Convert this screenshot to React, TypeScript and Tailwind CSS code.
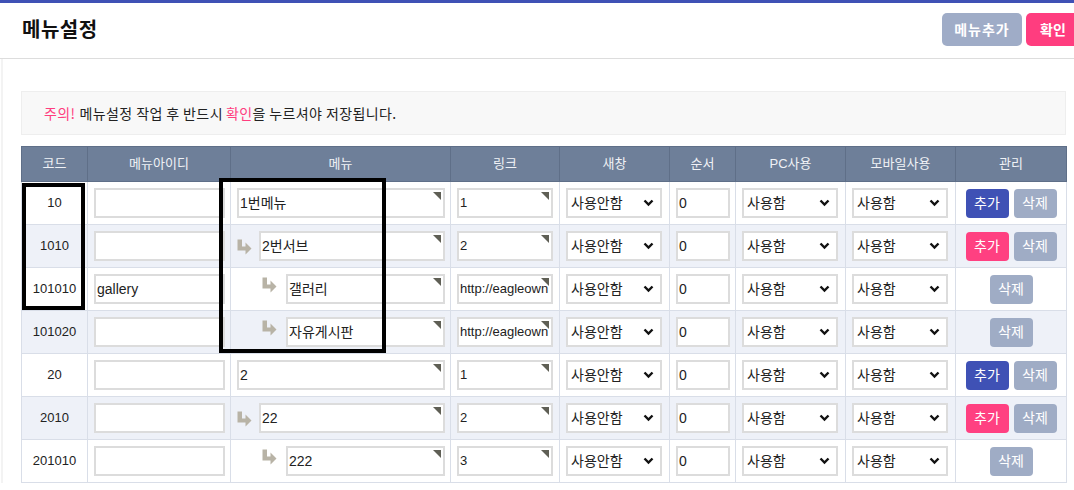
import React from "react";

const FONT = { fontFamily: '"Liberation Sans", "Noto Sans CJK KR", sans-serif' };
const KFONT = { fontFamily: '"Noto Sans CJK KR", "Liberation Sans", sans-serif' };

type Row = {
  code: string;
  id: string;
  menu: string;
  depth: number;
  link: string;
  add: "blue" | "pink" | null;
};

const rows: Row[] = [
  { code: "10", id: "", menu: "1번메뉴", depth: 0, link: "1", add: "blue" },
  { code: "1010", id: "", menu: "2번서브", depth: 1, link: "2", add: "pink" },
  { code: "101010", id: "gallery", menu: "갤러리", depth: 2, link: "http://eagleown", add: null },
  { code: "101020", id: "", menu: "자유게시판", depth: 2, link: "http://eagleown", add: null },
  { code: "20", id: "", menu: "2", depth: 0, link: "1", add: "blue" },
  { code: "2010", id: "", menu: "22", depth: 1, link: "2", add: "pink" },
  { code: "201010", id: "", menu: "222", depth: 2, link: "3", add: null },
];

function Arrow() {
  return (
    <svg width="15" height="16" viewBox="0 0 15 16" className="shrink-0">
      <path d="M0.5 0.5 H5 V7.5 H8.5 V3.5 L14.5 9.5 L8.5 15.5 V11.5 H0.5 Z" fill="#b8b3a6" />
    </svg>
  );
}

function Corner() {
  return (
    <span className="absolute right-[2px] top-[2px] w-0 h-0 border-l-[8px] border-l-transparent border-t-[8px] border-t-[#5f5f55]" />
  );
}

function TextBox({
  value,
  width,
  corner,
  small,
}: {
  value: string;
  width: number;
  corner?: boolean;
  small?: boolean;
}) {
  return (
    <div
      className={`relative h-[30px] border-2 border-[#dcdcdc] bg-white flex items-center ${
        small ? "text-[13px]" : "text-[14px]"
      } text-[#222] pl-[1px] overflow-hidden whitespace-nowrap`}
      style={{ width }}
    >
      {value}
      {corner && <Corner />}
    </div>
  );
}

function SelectBox({ value }: { value: string }) {
  return (
    <div className="h-[30px] w-[96px] border-2 border-[#dcdcdc] bg-white flex items-center justify-between pl-[3px] pr-[6px] text-[14px] text-[#222]">
      <span>{value}</span>
      <svg width="11" height="8" viewBox="0 0 11 8">
        <polyline points="1.5,1.5 5.5,5.5 9.5,1.5" fill="none" stroke="#111" strokeWidth="2.4" />
      </svg>
    </div>
  );
}

function Btn({ label, color }: { label: string; color: string }) {
  return (
    <div
      className="h-[29px] w-[43px] rounded-[4px] flex items-center justify-center text-white text-[14px]"
      style={{ backgroundColor: color }}
    >
      {label}
    </div>
  );
}

export default function App() {
  const headers = [
    ["코드", 66],
    ["메뉴아이디", 143],
    ["메뉴", 220],
    ["링크", 109],
    ["새창", 110],
    ["순서", 66],
    ["PC사용", 110],
    ["모바일사용", 110],
    ["관리", 111],
  ] as const;

  return (
    <div className="w-[1074px] h-[490px] overflow-hidden bg-white relative" style={FONT}>
      <div className="h-[3px] bg-[#3f51b5]" />
      <div className="h-[56px] border-b border-[#dddddd] flex items-center justify-between pl-[22px]">
        <h1 className="text-[20px] font-bold text-[#111] tracking-[0.5px] -mt-[3px]" style={KFONT}>
          메뉴설정
        </h1>
        <div className="flex gap-[4px] -mr-[6px] -mt-[2px]" style={KFONT}>
          <div className="h-[33px] w-[80px] rounded-[5px] bg-[#9facc7] text-white text-[14px] font-bold flex items-center justify-center tracking-[1px]">
            메뉴추가
          </div>
          <div className="h-[33px] w-[54px] rounded-[5px] bg-[#ff3d7f] text-white text-[14px] font-bold flex items-center justify-center">
            확인
          </div>
        </div>
      </div>

      <div className="ml-[1px] border-l-2 border-[#f3f3f3] pl-[18px] pr-[8px] pt-[32px]">
        <div
          className="h-[44px] w-[1045px] bg-[#f8f8f8] border border-[#eeeeee] flex items-center pl-[22px] text-[14px] tracking-[0.4px] text-[#222]"
          style={KFONT}
        >
          <span className="text-[#ff3d7f]">주의!</span>
          <span className="ml-[4px]">메뉴설정 작업 후 반드</span>
          <span>시 </span>
          <span className="text-[#ff3d7f] ml-[3px]">확인</span>
          <span>을 누르셔야 저장됩니다.</span>
        </div>

        <table className="mt-[11px] w-[1045px] border-collapse table-fixed text-[13px]">
          <colgroup>
            {headers.map(([h, w]) => (
              <col key={h} style={{ width: w }} />
            ))}
          </colgroup>
          <thead>
            <tr className="h-[35px] bg-[#6e7f99]">
              {headers.map(([h]) => (
                <th key={h} className="font-normal text-[#f0f2f6] border border-[#5f6f88] text-center">
                  {h}
                </th>
              ))}
            </tr>
          </thead>
          <tbody>
            {rows.map((r, i) => (
              <tr key={r.code} className={`h-[43px] ${i % 2 === 1 ? "bg-[#eef1f8]" : "bg-white"}`}>
                <td className="border border-[#d9dee8] text-center text-[#222]">{r.code}</td>
                <td className="border border-[#d9dee8] pl-[6px]">
                  <TextBox value={r.id} width={131} />
                </td>
                <td className="border border-[#d9dee8] pl-[6px]">
                  <div className="flex items-center">
                    {r.depth === 1 && (
                      <div className="w-[22px] flex items-center pt-[1px]">
                        <Arrow />
                      </div>
                    )}
                    {r.depth === 2 && (
                      <div className="w-[49px] flex items-start pl-[25px] -mt-[9px]">
                        <Arrow />
                      </div>
                    )}
                    <TextBox value={r.menu} width={r.depth === 0 ? 208 : r.depth === 1 ? 186 : 159} corner />
                  </div>
                </td>
                <td className="border border-[#d9dee8] pl-[6px]">
                  <TextBox value={r.link} width={96} corner small />
                </td>
                <td className="border border-[#d9dee8] pl-[6px]">
                  <SelectBox value="사용안함" />
                </td>
                <td className="border border-[#d9dee8] pl-[6px]">
                  <TextBox value="0" width={54} />
                </td>
                <td className="border border-[#d9dee8] pl-[6px]">
                  <SelectBox value="사용함" />
                </td>
                <td className="border border-[#d9dee8] pl-[6px]">
                  <SelectBox value="사용함" />
                </td>
                <td className="border border-[#d9dee8]">
                  <div className="flex justify-center gap-[5px]">
                    {r.add === "blue" && <Btn label="추가" color="#3f51b5" />}
                    {r.add === "pink" && <Btn label="추가" color="#ff4081" />}
                    <Btn label="삭제" color="#9facc5" />
                  </div>
                </td>
              </tr>
            ))}
          </tbody>
        </table>
      </div>

      {/* annotation boxes */}
      <div className="absolute left-[22px] top-[183px] w-[63px] h-[127px] border-[4px] border-black pointer-events-none" />
      <div className="absolute left-[219px] top-[178px] w-[167px] h-[175px] border-[4px] border-black pointer-events-none" />
    </div>
  );
}
